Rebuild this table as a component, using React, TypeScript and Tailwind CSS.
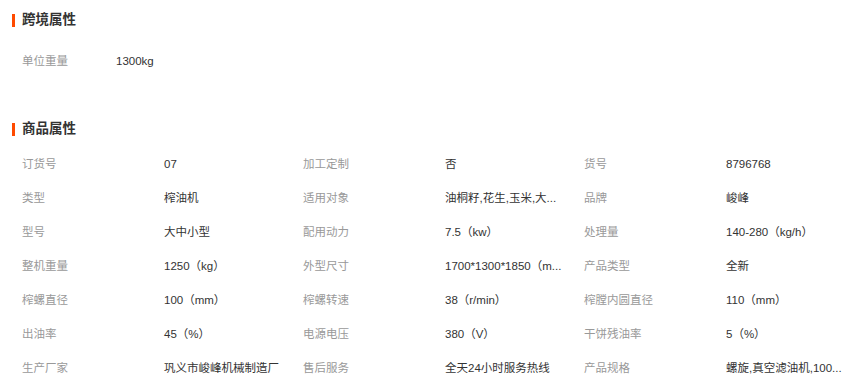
import React from 'react';

const FONT = '[font-family:"Liberation_Sans","Noto_Sans_CJK_SC",sans-serif]';

const crossBorder = [{ label: '单位重量', value: '1300kg' }];

const props: [string, string][] = [
  ['订货号', '07'],
  ['加工定制', '否'],
  ['货号', '8796768'],
  ['类型', '榨油机'],
  ['适用对象', '油桐籽,花生,玉米,大...'],
  ['品牌', '峻峰'],
  ['型号', '大中小型'],
  ['配用动力', '7.5（kw）'],
  ['处理量', '140-280（kg/h）'],
  ['整机重量', '1250（kg）'],
  ['外型尺寸', '1700*1300*1850（m...'],
  ['产品类型', '全新'],
  ['榨螺直径', '100（mm）'],
  ['榨螺转速', '38（r/min）'],
  ['榨膛内圆直径', '110（mm）'],
  ['出油率', '45（%）'],
  ['电源电压', '380（V）'],
  ['干饼残油率', '5（%）'],
  ['生产厂家', '巩义市峻峰机械制造厂'],
  ['售后服务', '全天24小时服务热线'],
  ['产品规格', '螺旋,真空滤油机,100...'],
];

function SectionTitle({ title }: { title: string }) {
  return (
    <div className="flex h-5 items-center pl-3">
      <span className="h-[13px] w-[3px] bg-[#ff4a00]" />
      <span className="ml-[7px] text-[13.5px] font-bold text-[#333]">{title}</span>
    </div>
  );
}

export default function App() {
  return (
    <div className={`min-h-[391px] w-[855px] bg-white pt-[10px] ${FONT}`}>
      <SectionTitle title="跨境属性" />
      <div className="mt-[15px] pl-[22px]">
        {crossBorder.map((item) => (
          <div key={item.label} className="flex h-[34px] items-center text-[11.5px]">
            <span className="w-[94px] text-[#999]">{item.label}</span>
            <span className="text-[#333]">{item.value}</span>
          </div>
        ))}
      </div>

      <div className="mt-[40px]">
        <SectionTitle title="商品属性" />
      </div>
      <div className="mt-[9px] grid grid-cols-[142px_139px_142px_139px_142px_1fr] pl-[22px] text-[11.5px]">
        {props.map(([label, value]) => (
          <React.Fragment key={label}>
            <div className="flex h-[34px] items-center text-[#999]">{label}</div>
            <div className="flex h-[34px] items-center whitespace-nowrap text-[#333]">{value}</div>
          </React.Fragment>
        ))}
      </div>
    </div>
  );
}
